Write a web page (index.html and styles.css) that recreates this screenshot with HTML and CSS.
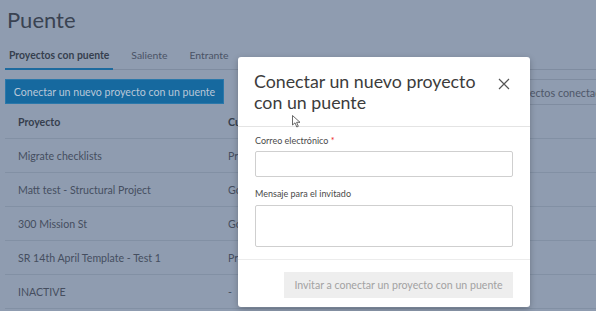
FILE: index.html
```html
<!DOCTYPE html>
<html lang="es">
<head>
  <meta charset="UTF-8">
  <link rel="stylesheet" href="styles.css">
  <title>Puente</title>
</head>
<body>
  <div class="page">
    <h1 class="page-title">Puente</h1>
    <nav class="tabs">
      <span class="tab active">Proyectos con puente</span>
      <span class="tab">Saliente</span>
      <span class="tab">Entrante</span>
    </nav>
    <div class="toolbar">
      <button class="primary">Conectar un nuevo proyecto con un puente</button>
      <div class="search">Buscar proyectos conectados</div>
    </div>
    <table class="projects">
      <thead>
        <tr><th class="col-name">Proyecto</th><th>Cuenta</th></tr>
      </thead>
      <tbody>
        <tr><td class="col-name">Migrate checklists</td><td>Pr</td></tr>
        <tr><td class="col-name">Matt test - Structural Project</td><td>Go</td></tr>
        <tr><td class="col-name">300 Mission St</td><td>Go</td></tr>
        <tr><td class="col-name">SR 14th April Template - Test 1</td><td>Pr</td></tr>
        <tr><td class="col-name">INACTIVE</td><td>-</td></tr>
      </tbody>
    </table>
  </div>

  <div class="modal">
    <div class="modal-header">
      <h2>Conectar un nuevo proyecto con un puente</h2>
      <svg class="close" width="12" height="12" viewBox="0 0 12 12">
        <path d="M1 1L11 11M11 1L1 11" stroke="#555" stroke-width="1.2" fill="none"/>
      </svg>
    </div>
    <div class="modal-body">
      <label>Correo electrónico <span class="req">*</span></label>
      <div class="field"></div>
      <label>Mensaje para el invitado</label>
      <div class="field area"></div>
    </div>
    <div class="modal-footer">
      <button class="disabled">Invitar a conectar un proyecto con un puente</button>
    </div>
  </div>

  <svg class="cursor" width="9" height="13" viewBox="0 0 9 13">
    <path d="M0.5 0.5L0.5 10L3 7.8L4.8 12L6.3 11.3L4.6 7.3L8 7.3Z" fill="#fff" stroke="#444" stroke-width="0.8"/>
  </svg>
</body>
</html>
```

FILE: styles.css
```css
/* page sits under a modal overlay, colours are the dimmed ones */
body {
  margin: 0;
  font-family: Lato, "Open Sans", sans-serif;
  background-color: #8f9cb0;
  color: #3c4555;
  overflow: hidden;
}

.page {
  width: 760px;
  padding: 0 0 0 5px;
}

.page-title {
  margin: 0;
  padding: 6px 0 0 2px;
  font-size: 22px;
  font-weight: 400;
  line-height: 28px;
  color: #3a4352;
}

.tabs {
  display: flex;
  margin-top: 12px;
  border-bottom: 1px solid #7f8ca0;
}

.tab {
  padding: 1px 4px 5px 4px;
  margin-right: 14px;
  font-size: 10.4px;
  line-height: 16px;
  color: #4a5366;
}

.tab.active {
  font-weight: 700;
  color: #363f4e;
  border-bottom: 2px solid #1d6a9e;
  margin-bottom: -1px;
}

.toolbar {
  display: flex;
  margin-top: 9px;
}

.primary {
  height: 25px;
  width: 219px;
  padding: 0;
  background-color: #16699f;
  border: 1px solid #2b78aa;
  color: #b9c7d8;
  font-family: inherit;
  font-size: 10.6px;
}

.search {
  margin-left: 250px;
  width: 260px;
  height: 26px;
  box-sizing: border-box;
  border-top: 1px solid #7f8ca0;
  border-bottom: 1px solid #7f8ca0;
  padding: 6px 0 0 0;
  font-size: 10.8px;
  color: #4e5769;
  white-space: nowrap;
}

.projects {
  border-collapse: collapse;
  width: 740px;
  font-size: 10.6px;
}

.projects th,
.projects td {
  text-align: left;
  padding: 0;
  border-bottom: 1px solid #8290a4;
  height: 33px;
}

.projects th {
  height: 33px;
  font-weight: 700;
  color: #363f4e;
}

.projects td {
  color: #454e5f;
}

.col-name {
  width: 210px;
  padding-left: 13px !important;
}

/* dialog */
.modal {
  position: absolute;
  left: 238px;
  top: 57px;
  width: 292px;
  height: 250px;
  background: #fff;
  border-radius: 3px;
  box-shadow: 0 2px 6px rgba(0, 0, 0, 0.25);
  display: flex;
  flex-direction: column;
  color: #3c3c3c;
}

.modal-header {
  display: flex;
  justify-content: space-between;
  align-items: flex-start;
  padding: 14px 20px 13px 16px;
  border-bottom: 1px solid #e4e4e4;
}

.modal-header h2 {
  margin: 0;
  width: 240px;
  font-size: 17.8px;
  font-weight: 400;
  line-height: 21px;
  color: #3c3c3c;
}

.close {
  margin-top: 7px;
}

.modal-body {
  display: flex;
  flex-direction: column;
  padding: 7px 17px 12px 17px;
  border-bottom: 1px solid #ececec;
}

.modal-body label {
  font-size: 9px;
  line-height: 14px;
  color: #4a4a4a;
  margin-bottom: 3px;
}

.req {
  color: #e22;
}

.field {
  height: 24px;
  border: 1px solid #cfcfcf;
  border-radius: 2px;
  margin-bottom: 10px;
}

.field.area {
  height: 40px;
  margin-top: 1px;
  margin-bottom: 0;
}

.modal-footer {
  display: flex;
  justify-content: flex-end;
  padding: 12px 17px 0 17px;
}

.disabled {
  width: 229px;
  height: 26px;
  padding: 0;
  background: #eeeeee;
  border: none;
  color: #a2a2a2;
  font-family: inherit;
  font-size: 10.6px;
}

.cursor {
  position: absolute;
  left: 292px;
  top: 115px;
}
```
